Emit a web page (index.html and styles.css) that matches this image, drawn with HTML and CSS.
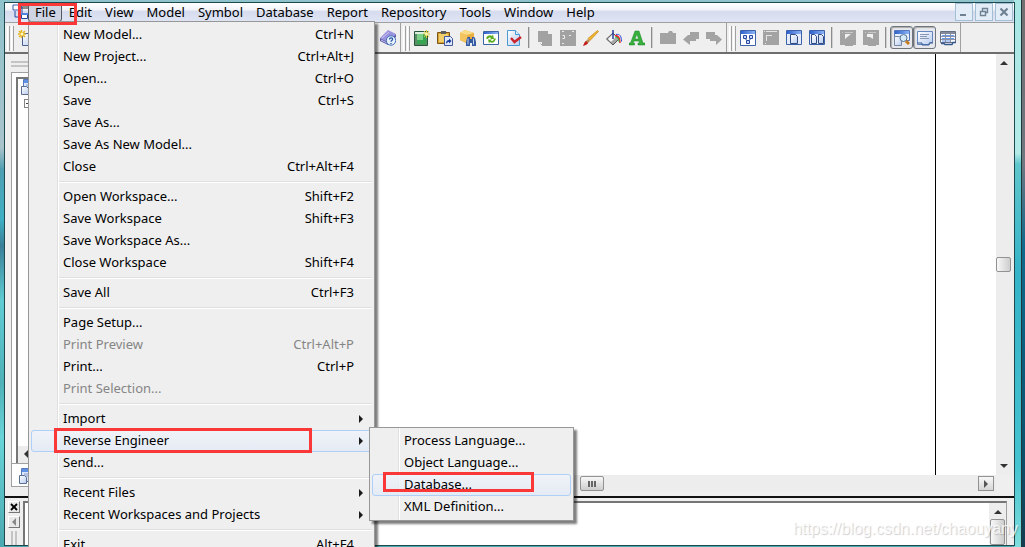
FILE: index.html
```html
<!DOCTYPE html>
<html lang="en">
<head>
<meta charset="utf-8">
<title>Workspace</title>
<link rel="stylesheet" href="styles.css">
</head>
<body>
<svg class="defs" aria-hidden="true">
  <defs>
    <linearGradient id="page" x1="0" y1="0" x2="1" y2="1"><stop offset="0" stop-color="#fff"/><stop offset="1" stop-color="#b9cdf0"/></linearGradient>
    <linearGradient id="bar" x1="0" y1="0" x2="1" y2="0"><stop offset="0" stop-color="#2f62cc"/><stop offset="1" stop-color="#8db4f4"/></linearGradient>
    <symbol id="i-new" viewBox="0 0 16 16"><path d="M4.500 3.500h8l3 3v9h-11z" fill="url(#page)" stroke="#4a5f8c"/><path d="M3.500 0v8M0 4h8M1 1l6 6M7 1l-6 6" stroke="#e5b526" stroke-width="1.500"/><circle cx="4" cy="4" r="1.500" fill="#fff8c0"/></symbol>
    <symbol id="i-book" viewBox="0 0 16 16"><path d="M0 8l8-8 8 4-8 8z" fill="#9a92dd"/><path d="M0 8l8 4v3l-8-4zM8 12l8-8v3l-8 8z" fill="#5f58a8"/><path d="M2 8l7-6M1 10l7 3.500" stroke="#c9c5f4"/><circle cx="11" cy="10.500" r="4.700" fill="#e8f0fb" stroke="#3f6fb8"/><path d="M9.500 9.500c0-2.500 3.500-2 3 0c0 1-1.500 1-1.500 2.200M11 13v1" fill="none" stroke="#2458a5" stroke-width="1.300"/></symbol>
    <symbol id="i-green" viewBox="0 0 16 16"><path d="M.5 1.500h13v14H.5z" fill="#5d8b68" stroke="#26573a"/><path d="M3 4h9v10H3z" fill="#35a552"/><path d="M3 4h6v6H3z" fill="#7cd088"/><path d="M1 2h12v2H1z" fill="#dcefe0"/><path d="M12.500 0v8M9 4h7M10 1l5 6M15 1l-5 6" stroke="#dfca3c"/><circle cx="12.500" cy="4" r="1.500" fill="#fffab0"/></symbol>
    <symbol id="i-paste" viewBox="0 0 16 16"><path d="M.5 2.500h12v11H.5z" fill="#d7a236" stroke="#7b5618"/><path d="M2 4h9v8H2z" fill="#f3ce6c"/><path d="M4 1h5v3H4z" fill="#5c5c5c"/><path d="M7.500 6.500h6l2 2v7h-8z" fill="#dfe8fa" stroke="#425a98"/><path d="M9 14c0-3 1-4 3-4V8.500l2.500 2.500-2.500 2.500V12c-1 0-2 .5-3 2z" fill="#173c9a"/></symbol>
    <symbol id="i-find" viewBox="0 0 16 16"><path d="M0 3l5-3 9 3v8l-8 2-6-3z" fill="#e8ad3e"/><path d="M0 3l5-3 9 3-7 2z" fill="#fbdc88"/><path d="M7 5v8l-7-3V3z" fill="#f4c45e"/><path d="M6 12l1-4 1-1h2v2h2V7h2l1 1 1 4v4h-4v-3h-2v3H6z" fill="#35599f"/><path d="M8 8.500v6M13.500 8.500v6" stroke="#c1d3f4"/></symbol>
    <symbol id="i-refresh" viewBox="0 0 16 16"><path d="M.5 1.500h15v13H.5z" fill="#fff" stroke="#3d65a5"/><path d="M1 2h14v2H1z" fill="url(#bar)"/><path d="M3 8.500c1-3 4-4 6-2.500l1-1.500 1 4.500H7l1.200-1C7 7 5.500 7.500 5 9zM13 8.500c-1 4-4 5-6 3.500l-1 1.500-1-4h4l-1.200 1c1.200 1 2.700.5 3.200-2z" fill="#5cac21"/></symbol>
    <symbol id="i-check" viewBox="0 0 16 16"><path d="M1.500.5h8l4 4v11h-12z" fill="url(#page)" stroke="#4b9ad1"/><path d="M9.500.5v4h4" fill="#d8f3ff" stroke="#4b9ad1"/><path d="M5 8l3.500 4L15 7" fill="none" stroke="#c9262d" stroke-width="2.500"/></symbol>
    <symbol id="i-g1" viewBox="0 0 16 16"><path d="M1 1h10v3h4v12H5v-4H1z" fill="#a2a2a2"/><path d="M3.500 13.500l1.500 1.500" stroke="#a2a2a2"/></symbol>
    <symbol id="i-g2" viewBox="0 0 16 16"><path d="M0 0h16v16H0z" fill="#a2a2a2"/><path d="M2 1.500h2M12 1.500h2M2.500 5.500h2v3h-2M9 5.500h2M2 13.500h2" fill="none" stroke="#ececec"/></symbol>
    <symbol id="i-brush" viewBox="0 0 16 16"><path d="M14.500.5l1 1-8.500 9-2-2z" fill="#f0b52c" stroke="#c88412" stroke-width=".7"/><path d="M5 9l2 2-3 3-2-2z" fill="#b58b58"/><path d="M3 11l2 2c-1 2-3 2-5 3 1-2 1-4 3-5z" fill="#c41f1f"/></symbol>
    <symbol id="i-fill" viewBox="0 0 16 16"><path d="M.5 9L7 3l6 6-6 6z" fill="#a5a5a5" stroke="#555"/><path d="M2 9l5-5 3 3-5 5z" fill="#f8f8f8"/><path d="M7 9V0" stroke="#253b9c" stroke-width="1.500"/><path d="M9 5.500c3.500 0 5 3 5 7.500" fill="none" stroke="#e22" stroke-width="1.500"/><path d="M9 7c3 0 4 2 4 5" fill="none" stroke="#26c64a"/><path d="M10 4.500c4-1 5.500 2 5.500 7" fill="none" stroke="#3045dd"/></symbol>
    <symbol id="i-font" viewBox="0 0 16 16"><path d="M6 1h4l4 12h2v2H9v-2h1.500L10 11H5l-1 2h1.500v2H0v-2h1.500zM6 9h3.500L8 4z" fill="#36b03b" stroke="#1b852a" stroke-width=".5"/></symbol>
    <symbol id="i-folder" viewBox="0 0 16 16"><path d="M0 3h8l1-2h3l1 2h3v11H0z" fill="#a3a3a3"/></symbol>
    <symbol id="i-back" viewBox="0 0 16 16"><path d="M7 2h9v7h-3v2H7v4L0 9.500 5 5h2z" fill="#a3a3a3"/></symbol>
    <symbol id="i-fwd" viewBox="0 0 16 16"><path d="M0 2h9v3h2l5 4.500L10 15v-4H4V9H0z" fill="#a3a3a3"/></symbol>
    <symbol id="i-diagram" viewBox="0 0 16 16"><path d="M.5.5h15v15H.5z" fill="#fff" stroke="#3d62aa"/><path d="M1 1h14v3H1z" fill="url(#bar)"/><path d="M3.500 5.500h3v3h-3zM9.500 5.500h3v3h-3zM6.500 10.500h3v3h-3zM5 8.500l2 2M11 8.500l-2 2" fill="#c7d7ff" stroke="#2849a0"/></symbol>
    <symbol id="i-g3" viewBox="0 0 16 16"><path d="M0 0h16v15H0z" fill="#a3a3a3"/><path d="M1 1.500h1M3 1.500h11M3 5.500h6M3.500 6v5M2 13.500h1" fill="none" stroke="#e4e4e4"/></symbol>
    <symbol id="i-page1" viewBox="0 0 16 16"><path d="M.5.5h15v14H.5z" fill="#e4ecfb" stroke="#3d62aa"/><path d="M1 1h14v3H1z" fill="url(#bar)"/><path d="M4.500 4.500h5l2 2v7h-7z" fill="url(#page)" stroke="#314b83"/></symbol>
    <symbol id="i-page2" viewBox="0 0 16 16"><path d="M.5.5h15v14H.5z" fill="#e4ecfb" stroke="#3d62aa"/><path d="M1 1h14v3H1z" fill="url(#bar)"/><path d="M2.500 4.500h3l2 2v7h-5zM9.500 4.500h3l2 2v7h-5z" fill="url(#page)" stroke="#314b83"/></symbol>
    <symbol id="i-g4" viewBox="0 0 16 16"><path d="M0 0h16v15h-3v1H5v-1H0z" fill="#a3a3a3"/><path d="M2 2.500h1M5 2.500h8" stroke="#c8c8c8"/><path d="M5 4h6L5 9z" fill="#f1f1f1"/></symbol>
    <symbol id="i-g5" viewBox="0 0 16 16"><path d="M0 0h16v15h-3v1H5v-1H0z" fill="#a3a3a3"/><path d="M2 2.500h1M5 2.500h8" stroke="#c8c8c8"/><path d="M4 4h6v5L7 7H4z" fill="#f1f1f1"/></symbol>
    <symbol id="i-zoom" viewBox="0 0 16 16"><path d="M.5.5h15v10H.5z" fill="#e9f0fb" stroke="#5479bd"/><path d="M1 1h14v3H1z" fill="url(#bar)"/><path d="M.5 6.500h5l2 2v7h-7z" fill="url(#page)" stroke="#7788a5"/><circle cx="9.500" cy="8" r="3.500" fill="#d5ebfa" stroke="#53718f"/><path d="M12 11l3 3" stroke="#c77a1c" stroke-width="3"/></symbol>
    <symbol id="i-note" viewBox="0 0 16 16"><path d="M.5 1.500h15v11h-3l-1 2h-11v-2z" fill="url(#page)" stroke="#6487bf"/><path d="M3 4.500h9M3 6.500h7M3 8.500h9" stroke="#8597b4"/><path d="M0 13h5v2h7l1-2h3" fill="none" stroke="#35588f"/></symbol>
    <symbol id="i-grid" viewBox="0 0 16 16"><path d="M.5 1.500h15v11H.5z" fill="#f6f8fc" stroke="#667084"/><path d="M1 2h14v2H1z" fill="#848a99"/><path d="M1 6.500h14M1 9.500h14M5.500 4v8M10.500 4v8" stroke="#8a93a6"/><path d="M2 5.500h3M6 5.500h4M11 5.500h3M2 8.500h3M6 8.500h4M11 8.500h3M2 11h3M6 11h4" stroke="#6d98ef"/><path d="M1 13.500h3l1 1h7l1-2h3" fill="none" stroke="#35588f" stroke-width="1.500"/></symbol>
    <symbol id="i-app" viewBox="0 0 16 16"><path d="M1 1h6v5H1z" fill="#fff" stroke="#3c5fae"/><path d="M9 0h7v5H9z" fill="#8b8b8b"/><path d="M3 7v6h5M7 3h3v6" fill="none" stroke="#23479f"/><path d="M9.500 9.500h6v5h-6z" fill="#fff" stroke="#23479f"/><path d="M9 9h7v2H9z" fill="#4e83df"/></symbol>
    <symbol id="i-tree" viewBox="0 0 16 16"><path d="M2.500.5h13v13h-13z" fill="#dce7fb" stroke="#5479bd"/><path d="M3 1h12v3H3z" fill="#5f90e4"/><path d="M5 6h8M5 8h8" stroke="#8299c8"/><path d="M.5 7.500h5l2 2v6h-7z" fill="url(#page)" stroke="#5c6e90"/></symbol>
  </defs>
</svg>

<div class="desktop">
  <div class="window">
    <header class="menubar">
      <svg class="app-icon"><use href="#i-app"/></svg>
      <nav class="menus">
        <button class="menu-title open">File</button>
        <button class="menu-title">Edit</button>
        <button class="menu-title">View</button>
        <button class="menu-title">Model</button>
        <button class="menu-title">Symbol</button>
        <button class="menu-title">Database</button>
        <button class="menu-title">Report</button>
        <button class="menu-title">Repository</button>
        <button class="menu-title">Tools</button>
        <button class="menu-title">Window</button>
        <button class="menu-title">Help</button>
      </nav>
      <div class="controls">
        <button class="control" aria-label="Minimize"><svg viewBox="0 0 10 10"><path d="M1 7h6v2H1z" fill="#6f8193"/></svg></button>
        <button class="control" aria-label="Restore"><svg viewBox="0 0 10 10"><path d="M3.500 4V1.500h5v4H7M1.500 4.500h5v4h-5z" fill="none" stroke="#6f8193" stroke-width="1.400"/></svg></button>
        <button class="control" aria-label="Close"><svg viewBox="0 0 10 10"><path d="M1.500 1.500l7 7M8.500 1.500l-7 7" stroke="#6f8193" stroke-width="2.200"/></svg></button>
      </div>
      <div class="menu file-menu">
        <button class="item"><span>New Model...</span><kbd>Ctrl+N</kbd></button>
        <button class="item"><span>New Project...</span><kbd>Ctrl+Alt+J</kbd></button>
        <button class="item"><span>Open...</span><kbd>Ctrl+O</kbd></button>
        <button class="item"><span>Save</span><kbd>Ctrl+S</kbd></button>
        <button class="item"><span>Save As...</span></button>
        <button class="item"><span>Save As New Model...</span></button>
        <button class="item"><span>Close</span><kbd>Ctrl+Alt+F4</kbd></button>
        <hr>
        <button class="item"><span>Open Workspace...</span><kbd>Shift+F2</kbd></button>
        <button class="item"><span>Save Workspace</span><kbd>Shift+F3</kbd></button>
        <button class="item"><span>Save Workspace As...</span></button>
        <button class="item"><span>Close Workspace</span><kbd>Shift+F4</kbd></button>
        <hr>
        <button class="item"><span>Save All</span><kbd>Ctrl+F3</kbd></button>
        <hr>
        <button class="item"><span>Page Setup...</span></button>
        <button class="item" disabled><span>Print Preview</span><kbd>Ctrl+Alt+P</kbd></button>
        <button class="item"><span>Print...</span><kbd>Ctrl+P</kbd></button>
        <button class="item" disabled><span>Print Selection...</span></button>
        <hr>
        <button class="item more"><span>Import</span></button>
        <div class="submenu-host">
          <button class="item more active"><span>Reverse Engineer</span></button>
          <div class="mark mark-reverse"></div>
          <div class="menu submenu">
            <button class="item"><span>Process Language...</span></button>
            <button class="item"><span>Object Language...</span></button>
            <div class="submenu-host">
              <button class="item active"><span>Database...</span></button>
              <div class="mark mark-database"></div>
            </div>
            <button class="item"><span>XML Definition...</span></button>
          </div>
        </div>
        <button class="item"><span>Send...</span></button>
        <hr>
        <button class="item more"><span>Recent Files</span></button>
        <button class="item more"><span>Recent Workspaces and Projects</span></button>
        <hr>
        <button class="item"><span>Exit</span><kbd>Alt+F4</kbd></button>
      </div>
      <div class="mark mark-file"></div>
    </header>

    <div class="toolbars">
      <div class="toolbar standard">
        <button class="tool" aria-label="New"><svg><use href="#i-new"/></svg></button>
        <button class="tool last" aria-label="Help"><svg><use href="#i-book"/></svg></button>
      </div>
      <div class="toolbar">
        <button class="tool" aria-label="New package"><svg><use href="#i-green"/></svg></button>
        <button class="tool" aria-label="Paste shortcut"><svg><use href="#i-paste"/></svg></button>
        <button class="tool" aria-label="Find"><svg><use href="#i-find"/></svg></button>
        <button class="tool" aria-label="Refresh"><svg><use href="#i-refresh"/></svg></button>
        <button class="tool" aria-label="Check model"><svg><use href="#i-check"/></svg></button>
        <i class="sep"></i>
        <button class="tool" aria-label="Group"><svg><use href="#i-g1"/></svg></button>
        <button class="tool" aria-label="Ungroup"><svg><use href="#i-g2"/></svg></button>
        <button class="tool" aria-label="Line style"><svg><use href="#i-brush"/></svg></button>
        <button class="tool" aria-label="Fill"><svg><use href="#i-fill"/></svg></button>
        <button class="tool" aria-label="Font"><svg><use href="#i-font"/></svg></button>
        <i class="sep"></i>
        <button class="tool" aria-label="Up"><svg><use href="#i-folder"/></svg></button>
        <button class="tool" aria-label="Back"><svg><use href="#i-back"/></svg></button>
        <button class="tool" aria-label="Forward"><svg><use href="#i-fwd"/></svg></button>
      </div>
      <div class="toolbar">
        <button class="tool" aria-label="Diagram"><svg><use href="#i-diagram"/></svg></button>
        <button class="tool" aria-label="Parent diagram"><svg><use href="#i-g3"/></svg></button>
        <button class="tool" aria-label="Single page"><svg><use href="#i-page1"/></svg></button>
        <button class="tool" aria-label="All pages"><svg><use href="#i-page2"/></svg></button>
        <i class="sep"></i>
        <button class="tool" aria-label="Previous view"><svg><use href="#i-g4"/></svg></button>
        <button class="tool" aria-label="Next view"><svg><use href="#i-g5"/></svg></button>
        <i class="sep"></i>
        <button class="tool pressed" aria-label="Browser"><svg><use href="#i-zoom"/></svg></button>
        <button class="tool pressed" aria-label="Output"><svg><use href="#i-note"/></svg></button>
        <button class="tool" aria-label="Result list"><svg><use href="#i-grid"/></svg></button>
      </div>
    </div>

    <main class="work">
      <aside class="browser">
        <div class="grip-h"></div>
        <div class="panel">
          <div class="tree">
            <svg class="tree-icon"><use href="#i-tree"/></svg>
            <span class="expander"></span>
            <div class="tree-scroll"><i class="arrow left"></i></div>
          </div>
          <div class="tab"><svg class="tree-icon"><use href="#i-tree"/></svg></div>
        </div>
      </aside>
      <section class="editor">
        <div class="canvas"></div>
        <div class="vscroll"><i class="arrow up"></i><i class="thumb"></i><i class="arrow down"></i></div>
        <div class="hscroll"><i class="thumb grooved"></i><button class="scroll-end" aria-label="Scroll right"><i class="arrow right"></i></button></div>
      </section>
    </main>

    <footer class="output">
      <div class="output-side">
        <button class="mini" aria-label="Close output"><svg viewBox="0 0 8 8"><path d="M1 1l6 6M7 1L1 7" stroke="#000" stroke-width="1.800"/></svg></button>
        <button class="mini" aria-label="Collapse"><i class="arrow left dim"></i></button>
        <div class="grip-v"></div>
      </div>
      <div class="log"><div class="vscroll"><i class="arrow up"></i><i class="thumb tall"></i></div></div>
    </footer>
  </div>
  <div class="watermark">https://blog.csdn.net/chaouyany</div>
</div>
</body>
</html>
```
FILE: styles.css
```css
* { box-sizing: border-box; }
body {
  margin: 0;
  overflow: hidden;
  font: 13px/22px "Noto Sans", "Open Sans", sans-serif;
  color: #000;
}
button { font: inherit; color: inherit; margin: 0; padding: 0; border: 0; background: none; text-align: left; }
i { display: block; }
.defs { position: absolute; width: 0; height: 0; }

.desktop {
  position: relative;
  height: 100vh;
  padding: 2px 10px 0 4px;
  background:
    linear-gradient(#707070, #6f7780 30%, #0e6a8c 45%, #0a5470 80%, #123e50) right / 3px 100% no-repeat,
    linear-gradient(#20383c, #20383c) calc(100% - 3px) 0 / 1px 100% no-repeat,
    linear-gradient(#a9e6e4, #b4ebe8 28%, #5fc6cc 30%, #35b3c8 50%, #45c3d0 85%, #7fdedd) right / 11px 100% no-repeat,
    linear-gradient(#8fc3cc, #a9c3cb 27%, #4f9fb2 31%, #3fb0c4 40%, #3a7f98 45%, #5fcdd2 55%, #4fb0b8 70%, #69d5d8 80%, #4aa9b0);
}
.window {
  display: flex;
  flex-direction: column;
  height: calc(100vh - 3px);
  border: 1px solid #1d4a50;
  background: #efefef;
}

/* menu bar */
.menubar {
  position: relative;
  flex: none;
  display: flex;
  height: 19px;
  background: linear-gradient(#fff, #f2f4fa 35%, #d6dcee 45%, #dfe5f4);
}
.app-icon { width: 16px; height: 16px; margin: 1px 0 0 7px; }
.menus { display: flex; flex: 1; }
.menu-title { padding: 0 5px 0 6px; line-height: 15px; border: 1px solid transparent; border-radius: 3px; }
.menu-title.open { background: #cfd4e2; border-color: #55585f; }
.controls { display: flex; gap: 2px; padding: 0 1px 1px 0; }
.control { width: 18px; height: 18px; border: 1px solid #a3bfd4; background: #e3edf8; display: grid; place-items: center; }
.control svg { width: 10px; height: 10px; }

/* menus */
.menu {
  position: absolute;
  z-index: 2;
  padding: 2px;
  border: 1px solid #979797;
  background: linear-gradient(90deg, #efefef 28px, #e0e0e0 28px, #e0e0e0 29px, #fff 29px, #fff 30px, #efefef 30px);
  box-shadow: 3px 3px 2px rgba(0, 0, 0, .5);
}
.file-menu { left: 23px; top: 18px; width: 347px; }
.submenu { left: 338px; top: -3px; width: 205px; }
.submenu-host { position: relative; }
.item {
  position: relative;
  display: flex;
  justify-content: space-between;
  width: 100%;
  height: 22px;
  padding: 0 17px 0 31px;
  border: 1px solid transparent;
  border-radius: 3px;
  line-height: 18px;
  white-space: nowrap;
}
.item kbd { font: inherit; }
.item:disabled { color: #858585; }
.item.active { border-color: #aecff7; background: linear-gradient(rgba(240, 244, 250, .8), rgba(226, 234, 246, .8)); }
.item.more::after {
  content: "";
  position: absolute;
  right: 8px;
  top: 6px;
  border: 4px solid transparent;
  border-left: 4px solid #1a1a1a;
  border-right: 0;
}
.menu hr { height: 2px; margin: 3px 0 3px 28px; border: 0; border-top: 1px solid #e0e0e0; border-bottom: 1px solid #fff; }

/* red highlight boxes */
.mark { position: absolute; z-index: 3; border: 3px solid #fb3838; pointer-events: none; }
.mark-file { left: 13px; top: 0; width: 59px; height: 22px; }
.mark-reverse { left: 23px; top: -2px; width: 258px; height: 25px; }
.mark-database { left: 11px; top: -2px; width: 151px; height: 20px; }

/* toolbars */
.toolbars { flex: none; display: flex; height: 32px; border-top: 1px solid #a0a0a0; border-bottom: 2px solid #6e6e6e; }
.toolbar {
  display: flex;
  align-items: center;
  padding: 0 1px 0 9px;
  border-right: 1px solid #a0a0a0;
  background:
    linear-gradient(90deg, #fff 1px, #f4f4f4 1px, #f4f4f4 2px, #a0a0a0 2px, #a0a0a0 3px, transparent 3px, transparent 4px, #fff 4px, #fff 5px, #f4f4f4 5px, #f4f4f4 6px, #a0a0a0 6px) 2px 3px / 7px 25px no-repeat;
}
.standard { width: 396px; }
.last { margin-left: auto; }
.tool { width: 23px; height: 23px; display: grid; place-items: center; border-radius: 3px; }
.tool svg { width: 16px; height: 16px; }
.pressed { border: 1px solid #70757d; border-radius: 3px; background: #e6e8ed; box-shadow: inset 1px 1px 1px #aaa; }
.sep { width: 2px; height: 21px; margin: 0 3px; background: linear-gradient(90deg, #8c8c8c 1px, #d0d0d0 1px); }

/* work area */
.work { flex: 1; min-height: 0; display: flex; }
.browser { width: 200px; padding: 7px 6px 9px 6px; display: flex; flex-direction: column; }
.grip-h { height: 6px; margin-bottom: 5px; border-top: 2px solid #c4c4c4; border-bottom: 2px solid #c4c4c4; }
.panel { flex: 1; display: flex; flex-direction: column; border: 1px solid #a0a0a0; background: #fff; }
.tree { flex: 1; display: flex; flex-direction: column; margin: 4px 4px 0; border: 2px solid #767676; border-bottom: 0; }
.tree-icon { width: 16px; height: 16px; margin-left: 3px; }
.expander { width: 9px; height: 9px; margin: 4px 0 0 6px; border: 1px solid #848484; background: linear-gradient(#444, #444) center / 5px 1px no-repeat; }
.tree-scroll { margin-top: auto; height: 17px; background: #ececec; padding: 4px 6px; }
.tab { height: 23px; border-top: 1px solid #a0a0a0; padding: 4px; }
.editor { flex: 1; display: grid; grid-template: 1fr 17px / 1fr 18px; padding-bottom: 4px; }
.canvas { background: linear-gradient(#000, #000) calc(100% - 60px) 0 / 1px 100% no-repeat #fff; }
.vscroll { background: #ededed; display: flex; flex-direction: column; align-items: center; justify-content: space-between; padding: 7px 3px 7px 0; }
.hscroll { background: #ededed; display: flex; align-items: center; padding-right: 2px; }
.thumb { width: 15px; height: 15px; border: 1px solid #929292; border-radius: 2px; background: linear-gradient(90deg, #f8f8f8, #cdcdcd); }
.grooved { width: 24px; margin-left: 375px; background: repeating-linear-gradient(90deg, #666 0, #666 2px, transparent 2px, transparent 3px) 7px 4px / 8px 6px no-repeat, linear-gradient(#f8f8f8, #cdcdcd); }
.scroll-end { width: 16px; height: 15px; margin-left: auto; border: 1px solid #929292; background: linear-gradient(#f8f8f8, #d5d5d5); display: grid; place-items: center; }
.arrow { width: 0; height: 0; border: 4px solid transparent; }
.up { border-bottom-color: #333; border-top: 0; }
.down { border-top-color: #333; border-bottom: 0; }
.left { border-right-color: #333; border-left: 0; }
.right { border-left-color: #555; border-right: 0; }
.dim { border-right-color: #888; }

/* output */
.output { flex: none; display: flex; height: 49px; border-top: 2px solid #111; }
.output-side { width: 18px; display: flex; flex-direction: column; gap: 3px; padding: 3px 0 0 3px; }
.mini { width: 12px; height: 12px; border: 1px solid #fff; border-right-color: #777; border-bottom-color: #777; background: #e8e8e8; display: grid; place-items: center; }
.mini svg { width: 8px; height: 8px; }
.grip-v { flex: 1; width: 6px; margin-left: 3px; border-left: 2px solid #c4c4c4; border-right: 2px solid #c4c4c4; }
.log { flex: 1; display: flex; justify-content: flex-end; margin: 3px 7px 0 0; border: 2px solid #767676; border-bottom: 0; border-right: 1px solid #a0a0a0; background: #fff; }
.log .vscroll { width: 17px; padding: 7px 1px 0; }
.tall { height: 26px; }

.watermark {
  position: absolute;
  z-index: 4;
  right: 7px;
  bottom: 8px;
  font: 16px/20px "Liberation Sans", sans-serif;
  color: rgba(255, 255, 255, .8);
  text-shadow: 1px 1px 1px rgba(0, 0, 0, .2);
}
```
